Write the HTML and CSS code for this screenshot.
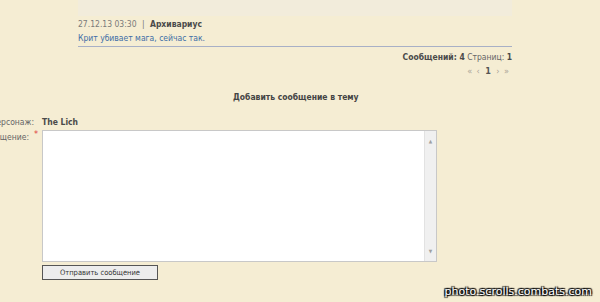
FILE: index.html
```html
<!DOCTYPE html>
<html lang="ru">
<head>
  <meta charset="UTF-8" />
  <title>Тема</title>
  <link rel="stylesheet" href="styles.css">
</head>
<body>
  <div class="topic">
    <div class="band"></div>
    <div class="post">
      <div class="post-head">
        <span class="date">27.12.13 03:30</span>
        <span class="sep">|</span>
        <span class="author">Архивариус</span>
      </div>
      <div class="post-text">Крит убивает мага, сейчас так.</div>
    </div>
    <div class="stats">
      <b>Сообщений: 4</b> Страниц: <b>1</b>
    </div>
    <div class="pager">
      <span>&laquo;</span>
      <span>&lsaquo;</span>
      <b>1</b>
      <span>&rsaquo;</span>
      <span>&raquo;</span>
    </div>
  </div>

  <h2 class="form-title">Добавить сообщение в тему</h2>

  <div class="reply">
    <div class="label">Персонаж:</div>
    <div class="value char">The Lich</div>

    <div class="label">Сообщение:<span class="req">*</span></div>
    <div class="value">
      <div class="editor">
        <textarea></textarea>
        <div class="scroll">
          <span>&#9650;</span>
          <span>&#9660;</span>
        </div>
      </div>
      <button class="send">Отправить сообщение</button>
    </div>
  </div>

  <div class="watermark">photo.scrolls.combats.com</div>
</body>
</html>
```

FILE: styles.css
```css
body {
  margin: 0;
  background: #f5edd3;
  font-family: Tahoma, "DejaVu Sans Condensed", "DejaVu Sans", sans-serif;
  font-size: 8.5px;
  color: #555;
  height: 302px;
  overflow: hidden;
  position: relative;
}

.topic {
  margin-left: 78px;
  width: 434px;
}

.band {
  height: 16px;
  background: #f2ecdb;
}

.post {
  border-bottom: 1px solid #a8b0c6;
  padding-bottom: 1px;
}

.post-head {
  line-height: 14px;
  padding-top: 1px;
}

.date {
  color: #7a7a7a;
}

.sep {
  color: #777;
  margin: 0 3px;
}

.author {
  font-weight: bold;
  color: #4a4a4a;
}

.post-text {
  color: #3f6ea6;
  line-height: 14px;
}

.stats {
  text-align: right;
  color: #666;
  line-height: 14px;
  margin-top: 3px;
}

.stats b {
  color: #4a4a4a;
}

.pager {
  text-align: right;
  color: #a9a397;
  line-height: 14px;
  padding-right: 2px;
}

.pager span {
  font-size: 9px;
  margin: 0 1px;
}

.pager b {
  color: #555;
  font-size: 9px;
  margin: 0 2px;
}

.form-title {
  margin: 12px 0 0 0;
  padding-left: 233px;
  font-size: 8.5px;
  line-height: 14px;
  color: #444;
  white-space: nowrap;
}

.reply {
  display: grid;
  grid-template-columns: 105px 1fr;
  column-gap: 7px;
  margin-left: -70px;
  margin-top: 11px;
}

.label {
  position: relative;
  text-align: right;
  color: #666;
  line-height: 14px;
  white-space: nowrap;
  padding-right: 1px;
}

.value {
  line-height: 14px;
}

.char {
  font-weight: bold;
  color: #4a4a4a;
  margin-bottom: 1px;
}

.label:nth-of-type(3) {
  padding-right: 6px;
}

.req {
  position: absolute;
  right: -3px;
  top: -3px;
  color: #e04040;
  font-size: 9px;
}

.editor {
  display: flex;
  width: 393px;
  height: 130px;
  border: 1px solid #c8c8c8;
  background: #fff;
}

.editor textarea {
  flex: 1;
  border: none;
  outline: none;
  resize: none;
  margin: 0;
  padding: 2px;
}

.scroll {
  width: 11px;
  background: #f0f0f0;
  border-left: 1px solid #e2e2e2;
  display: flex;
  flex-direction: column;
  justify-content: space-between;
  align-items: center;
  color: #a0a0a0;
  font-size: 5px;
  padding: 3px 0;
}

.send {
  display: block;
  margin-top: 3px;
  width: 116px;
  height: 15px;
  padding: 0;
  border: 1px solid #555;
  background: #ededed;
  font-family: Tahoma, "DejaVu Sans Condensed", "DejaVu Sans", sans-serif;
  font-size: 7.5px;
  color: #333;
}

.watermark {
  position: absolute;
  right: 8px;
  bottom: 4px;
  font-family: "DejaVu Sans", sans-serif;
  font-size: 11px;
  color: #fff;
  text-shadow: 1px 1px 1px #000, -1px -1px 1px #000, 1px -1px 1px #000, -1px 1px 1px #000;
}
```
